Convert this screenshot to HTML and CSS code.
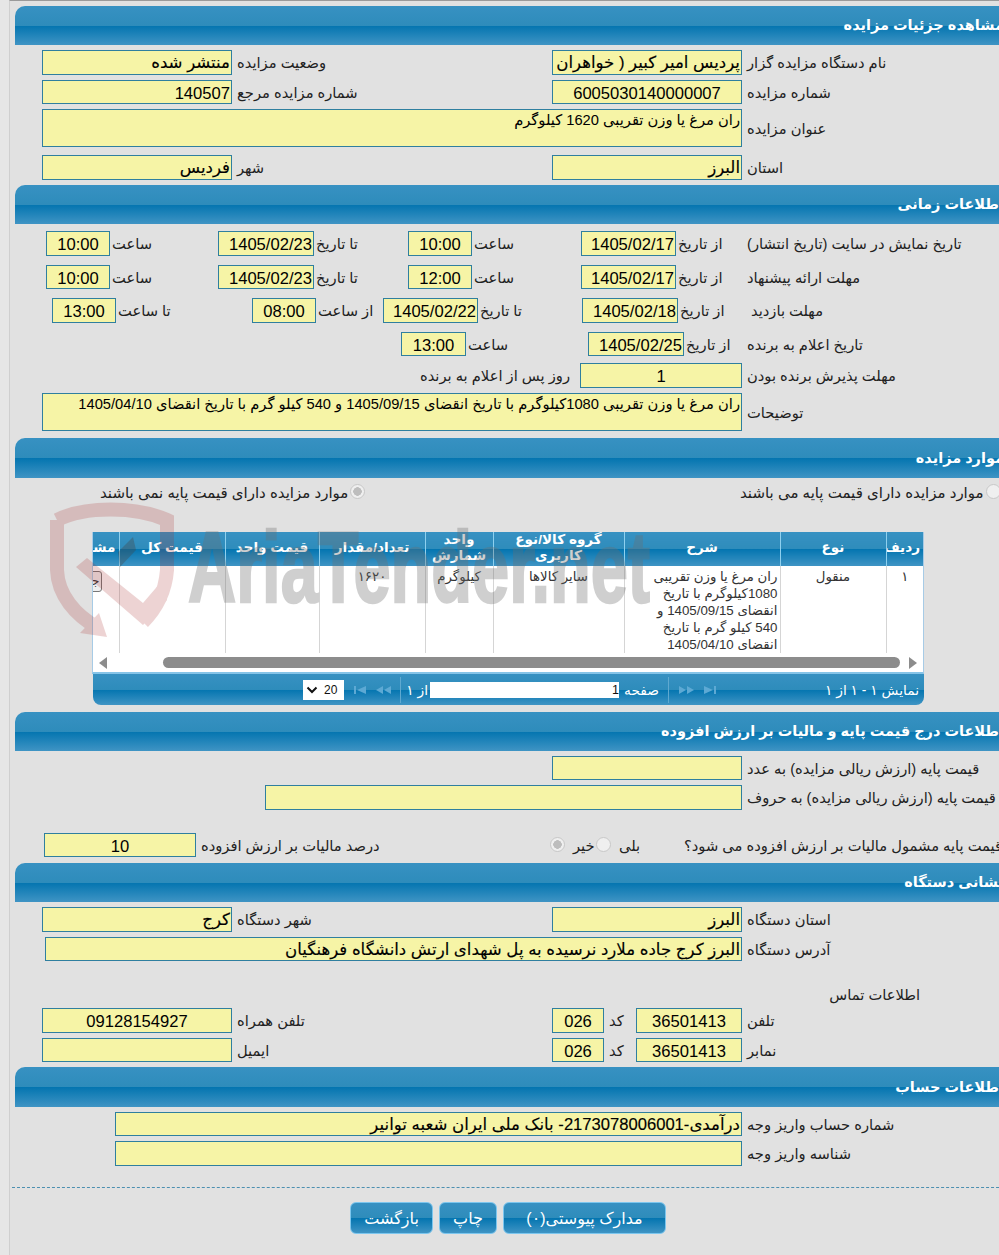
FILE: index.html
```html
<!DOCTYPE html>
<html lang="fa">
<head>
<meta charset="utf-8">
<title>مشاهده جزئیات مزایده</title>
<link rel="stylesheet" href="styles.css">
</head>
<body>
<div class="page">
  <svg class="watermark" viewBox="0 0 700 160" width="700" height="160" aria-hidden="true">
    <g class="wm-red">
      <path d="M57 20 C85 6 135 6 167 20 V70 C165 95 155 110 143 122" fill="none" stroke="#a82a2a" stroke-width="14"/>
      <path d="M57 20 V70 C58 95 75 115 98 128" fill="none" stroke="#a82a2a" stroke-width="14"/>
      <path d="M76 67 L87 58 L143 103 L167 75 V100 L143 125 Z" fill="#a82a2a"/>
      <path d="M80 133 L99 113 L107 137 Z" fill="#a82a2a"/>
    </g>
    <path d="M118 52 L133 37 L136 50 L120 67 Z" fill="#444" fill-opacity=".35"/>
    <text class="wm-text" x="188" y="102" textLength="462" lengthAdjust="spacingAndGlyphs">AriaTender.net</text>
  </svg>

  <section class="sec">
    <h2 class="sec-head" dir="rtl">مشاهده جزئیات مزایده</h2>
    <div class="sec-body gap5">
      <div class="row two">
        <div class="field txt" dir="rtl">منتشر شده</div><span class="lbl" dir="rtl">وضعیت مزایده</span>
        <div class="field txt" dir="rtl">پردیس امیر کبیر ( خواهران )</div><span class="lbl" dir="rtl">نام دستگاه مزایده گزار</span>
      </div>
      <div class="row two h24">
        <div class="field num" dir="rtl">140507</div><span class="lbl" dir="rtl">شماره مزایده مرجع</span>
        <div class="field num center">6005030140000007</div><span class="lbl" dir="rtl">شماره مزایده</span>
      </div>
      <div class="row wide h38">
        <div class="field area" dir="rtl">ران مرغ یا وزن تقریبی 1620 کیلوگرم</div><span class="lbl" dir="rtl">عنوان مزایده</span>
      </div>
      <div class="row two mt3">
        <div class="field txt" dir="rtl">فردیس</div><span class="lbl" dir="rtl">شهر</span>
        <div class="field txt" dir="rtl">البرز</div><span class="lbl" dir="rtl">استان</span>
      </div>
    </div>
  </section>

  <section class="sec">
    <h2 class="sec-head" dir="rtl">اطلاعات زمانی</h2>
    <div class="sec-body times">
      <div class="row t-a">
        <div class="field num center">10:00</div><span class="lbl-s" dir="rtl">ساعت</span>
        <div class="field num" dir="rtl">1405/02/23</div><span class="lbl-s" dir="rtl">تا تاریخ</span>
        <div class="field num center">10:00</div><span class="lbl-s" dir="rtl">ساعت</span>
        <div class="field num" dir="rtl">1405/02/17</div><span class="lbl-s" dir="rtl">از تاریخ</span>
        <span class="lbl" dir="rtl">تاریخ نمایش در سایت (تاریخ انتشار)</span>
      </div>
      <div class="row t-a h24">
        <div class="field num center">10:00</div><span class="lbl-s" dir="rtl">ساعت</span>
        <div class="field num" dir="rtl">1405/02/23</div><span class="lbl-s" dir="rtl">تا تاریخ</span>
        <div class="field num center">12:00</div><span class="lbl-s" dir="rtl">ساعت</span>
        <div class="field num" dir="rtl">1405/02/17</div><span class="lbl-s" dir="rtl">از تاریخ</span>
        <span class="lbl" dir="rtl">مهلت ارائه پیشنهاد</span>
      </div>
      <div class="row t-b">
        <div class="field num center">13:00</div><span class="lbl-s" dir="rtl">تا ساعت</span>
        <div class="field num center">08:00</div><span class="lbl-s" dir="rtl">از ساعت</span>
        <div class="field num" dir="rtl">1405/02/22</div><span class="lbl-s" dir="rtl">تا تاریخ</span>
        <div class="field num" dir="rtl">1405/02/18</div><span class="lbl-s" dir="rtl">از تاریخ</span>
        <span class="lbl" dir="rtl">مهلت بازدید</span>
      </div>
      <div class="row t-c h24">
        <div class="field num center">13:00</div><span class="lbl-s" dir="rtl">ساعت</span>
        <div class="field num" dir="rtl">1405/02/25</div><span class="lbl-s" dir="rtl">از تاریخ</span>
        <span class="lbl" dir="rtl">تاریخ اعلام به برنده</span>
      </div>
      <div class="row t-d mt-2">
        <span class="lbl-end" dir="rtl">روز پس از اعلام به برنده</span>
        <div class="field num center">1</div>
        <span class="lbl" dir="rtl">مهلت پذیرش برنده بودن</span>
      </div>
      <div class="row wide h38 mt-3">
        <div class="field area" dir="rtl">ران مرغ یا وزن تقریبی 1080کیلوگرم با تاریخ انقضای 1405/09/15 و 540 کیلو گرم با تاریخ انقضای 1405/04/10</div><span class="lbl" dir="rtl">توضیحات</span>
      </div>
    </div>
  </section>

  <section class="sec sec-items">
    <h2 class="sec-head tall" dir="rtl">موارد مزایده</h2>
    <div class="radios">
      <label class="choice c-no" dir="rtl"><i class="radio on"></i><span>موارد مزایده دارای قیمت پایه نمی باشند</span></label>
      <label class="choice c-yes" dir="rtl"><i class="radio"></i><span>موارد مزایده دارای قیمت پایه می باشند</span></label>
    </div>
    <div class="grid-box">
      <div class="grid-clip">
        <table class="grid" dir="rtl">
          <colgroup>
            <col class="c1"><col class="c2"><col class="c3"><col class="c4"><col class="c5"><col class="c6"><col class="c7"><col class="c8"><col class="c9">
          </colgroup>
          <thead>
            <tr><th>ردیف</th><th>نوع</th><th>شرح</th><th>گروه کالا/نوع کاربری</th><th>واحد شمارش</th><th>تعداد/مقدار</th><th>قیمت واحد</th><th>قیمت کل</th><th>مشاهده</th></tr>
          </thead>
          <tbody>
            <tr>
              <td class="mid">۱</td><td class="mid">منقول</td>
              <td>ران مرغ یا وزن تقریبی 1080کیلوگرم با تاریخ انقضای 1405/09/15 و 540 کیلو گرم با تاریخ انقضای 1405/04/10</td>
              <td class="mid">سایر کالاها</td><td class="mid">کیلوگرم</td><td class="mid">۱۶۲۰</td><td></td><td></td>
              <td class="act"><span class="mini-btn">جزئیات</span></td>
            </tr>
          </tbody>
        </table>
      </div>
      <div class="hscroll">
        <i class="arr arr-l"></i><div class="track"><div class="thumb"></div></div><i class="arr arr-r"></i>
      </div>
      <div class="pager">
        <div class="pick"><span>20</span>
          <svg width="12" height="8" viewBox="0 0 12 8"><path d="M1.5 1.5 6 6l4.5-4.5" fill="none" stroke="#111" stroke-width="2"/></svg>
        </div>
        <svg class="pg-ic" width="12" height="8" viewBox="0 0 12 8"><path d="M0 0h2v8H0zM12 0v8L3 4z"/></svg>
        <svg class="pg-ic" width="15" height="8" viewBox="0 0 15 8"><path d="M7 0v8L0 4zM15 0v8L8 4z"/></svg>
        <i class="pg-sep"></i>
        <span class="pg-txt pg-of" dir="rtl">از ۱</span>
        <div class="pg-input">1</div>
        <span class="pg-txt" dir="rtl">صفحه</span>
        <i class="pg-sep"></i>
        <svg class="pg-ic" width="15" height="8" viewBox="0 0 15 8"><path d="M0 0v8l7-4zM8 0v8l7-4z"/></svg>
        <svg class="pg-ic" width="12" height="8" viewBox="0 0 12 8"><path d="M0 0v8l9-4zM10 0h2v8h-2z"/></svg>
        <span class="pg-txt pg-info" dir="rtl">نمایش ۱ - ۱ از ۱</span>
      </div>
    </div>
  </section>

  <section class="sec">
    <h2 class="sec-head" dir="rtl">اطلاعات درج قیمت پایه و مالیات بر ارزش افزوده</h2>
    <div class="sec-body price">
      <div class="row one">
        <div class="field txt" dir="rtl"></div><span class="lbl" dir="rtl">قیمت پایه (ارزش ریالی مزایده) به عدد</span>
      </div>
      <div class="row words">
        <div class="field txt" dir="rtl"></div><span class="lbl" dir="rtl">قیمت پایه (ارزش ریالی مزایده) به حروف</span>
      </div>
      <div class="row tax">
        <div class="field num center">10</div><span class="lbl" dir="rtl">درصد مالیات بر ارزش افزوده</span>
        <label class="mini-choice" dir="rtl"><span>خیر</span><i class="radio on"></i></label>
        <label class="mini-choice" dir="rtl"><span>بلی</span><i class="radio"></i></label>
        <span class="lbl" dir="rtl">قیمت پایه مشمول مالیات بر ارزش افزوده می شود؟</span>
      </div>
    </div>
  </section>

  <section class="sec">
    <h2 class="sec-head" dir="rtl">نشانی دستگاه</h2>
    <div class="sec-body gap5">
      <div class="row two">
        <div class="field txt" dir="rtl">کرج</div><span class="lbl" dir="rtl">شهر دستگاه</span>
        <div class="field txt" dir="rtl">البرز</div><span class="lbl" dir="rtl">استان دستگاه</span>
      </div>
      <div class="row addr h24">
        <div class="field txt" dir="rtl">البرز کرج جاده ملارد نرسیده به پل شهدای ارتش دانشگاه فرهنگیان</div><span class="lbl" dir="rtl">آدرس دستگاه</span>
      </div>
      <div class="contact-title" dir="rtl">اطلاعات تماس</div>
      <div class="row phone">
        <div class="field num center">09128154927</div><span class="lbl" dir="rtl">تلفن همراه</span>
        <div class="field num center">026</div><span class="lbl" dir="rtl">کد</span>
        <div class="field num center">36501413</div><span class="lbl" dir="rtl">تلفن</span>
      </div>
      <div class="row phone h24">
        <div class="field num center"></div><span class="lbl" dir="rtl">ایمیل</span>
        <div class="field num center">026</div><span class="lbl" dir="rtl">کد</span>
        <div class="field num center">36501413</div><span class="lbl" dir="rtl">نمابر</span>
      </div>
    </div>
  </section>

  <section class="sec">
    <h2 class="sec-head tall" dir="rtl">اطلاعات حساب</h2>
    <div class="sec-body gap5">
      <div class="row acct h24">
        <div class="field txt" dir="rtl">درآمدی-2173078006001- بانک ملی ایران شعبه توانیر</div><span class="lbl" dir="rtl">شماره حساب واریز وجه</span>
      </div>
      <div class="row acct">
        <div class="field txt" dir="rtl"></div><span class="lbl" dir="rtl">شناسه واریز وجه</span>
      </div>
    </div>
  </section>

  <div class="actions">
    <button class="btn b-back" type="button">بازگشت</button>
    <button class="btn b-print" type="button">چاپ</button>
    <button class="btn b-docs" type="button">مدارک پیوستی(۰)</button>
  </div>
</div>
</body>
</html>
```

FILE: styles.css
```css
* { box-sizing: border-box; }
html, body { margin: 0; padding: 0; height: 1255px; overflow: hidden; background: #e6e6e6; }
body { font-family: "Liberation Sans", "DejaVu Sans", sans-serif; color: #222; }

.page {
  position: relative;
  width: 1040px;
  height: 1255px;
  margin-left: 9px;
  padding: 5px 0 0 6px;
  background: #e1e1e1;
  border-left: 1px solid #cfcfcf;
  border-top: 1px solid #9a9a9a;
}
.watermark { position: absolute; left: -10px; top: 499px; z-index: 5; pointer-events: none; }
.wm-red { opacity: .2; }
.wm-text {
  font-family: "Liberation Sans", sans-serif;
  font-weight: 700;
  font-size: 100px;
  fill: #6e6e6e;
  stroke: #6e6e6e;
  stroke-width: 2.5;
  opacity: .32;
}

.sec { width: 995px; margin-left: -1px; padding-left: 1px; }
.sec-head {
  margin: 0 0 0 -1px;
  height: 39px;
  padding: 9px 7px 0 0;
  width: 996px;
  font-size: 14.5px;
  line-height: 20px;
  font-weight: 700;
  color: #fff;
  white-space: nowrap;
  border-radius: 10px 0 0 0;
  background: linear-gradient(#3791c2 0, #2e8cbb 50%, #0475b0 51%, #3f94c4 100%);
}
.sec-head.tall { height: 40px; padding-top: 10px; }

.sec-body { display: flex; flex-direction: column; margin-left: -16px; }
.gap5 { gap: 5px; padding-top: 5px; padding-bottom: 5px; }

.row { display: grid; height: 25px; grid-template-rows: 100%; align-items: stretch; }
.h24 { height: 24px; }
.h38 { height: 38px; }
.mt3 { margin-top: 3px; }
.mt-2 { margin-top: -2px; }
.mt-3 { margin-top: -3px; }

.two { grid-template-columns: 190px 320px 190px 1fr; padding-left: 42px; }
.wide { grid-template-columns: 700px 1fr; padding-left: 42px; }
.addr { grid-template-columns: 697px 1fr; padding-left: 45px; }
.acct { grid-template-columns: 627px 1fr; padding-left: 115px; }

.field {
  height: 100%;
  padding: 0 1px;
  background: #f6f4a6;
  border: 1px solid #2f7f9f;
  color: #000;
  white-space: nowrap;
  overflow: hidden;
  text-align: right;
}
.txt { font-size: 16.6px; line-height: 24px; -webkit-text-stroke: .15px #000; }
.num { font-size: 16.6px; line-height: 25px; }
.center { text-align: center; }
.area { font-size: 14.7px; line-height: 20px; }

.lbl, .lbl-s, .lbl-end {
  justify-self: start;
  font-size: 14.7px;
  line-height: 27px;
  color: #222;
  white-space: nowrap;
}
.lbl { padding-left: 5px; }
.wide .lbl { align-self: center; padding-top: 3px; }
.lbl-s { padding-left: 2px; }
.lbl-end { justify-self: end; padding-right: 10px; }

.times { padding: 7px 0; }
.times .row { margin-bottom: 9px; }
.times .row.t-d { margin-bottom: 8px; }
.times .row.wide { margin-bottom: 0; }
.t-a { grid-template-columns: 64px 108px 96px 94px 64px 109px 95px 71px 1fr; padding-left: 46px; }
.t-a .lbl, .t-c .lbl { padding-left: 0; }
.t-b { grid-template-columns: 64px 136px 64px 67px 95px 104px 96px 69px 1fr; padding-left: 52px; }
.t-b .lbl { padding-left: 4px; }
.t-c { grid-template-columns: 65px 122px 96px 63px 1fr; padding-left: 401px; }
.t-d { grid-template-columns: 580px 162px 1fr; }

.radios { position: relative; height: 54px; }
.choice {
  position: absolute;
  top: 5px;
  display: flex;
  align-items: flex-start;
  gap: 2px;
  font-size: 15px;
  line-height: 20px;
  white-space: nowrap;
}
.c-no { left: 84px; }
.c-yes { left: 724px; }
.radio {
  display: block;
  width: 15px;
  height: 15px;
  margin-top: 1px;
  border-radius: 50%;
  background: #efefef;
  border: 1px solid #c8c8c8;
  flex: none;
}
.radio.on { background: radial-gradient(#bdbdbd 0 4px, #efefef 4.5px); }

.grid-box { width: 832px; margin: 0 0 7px 76px; height: 173px; display: flex; flex-direction: column; }
.grid-clip { height: 121px; overflow: hidden; background: #fff; border-left: 1px solid #a7cbe6; border-right: 1px solid #a7cbe6; position: relative; }
.grid { table-layout: fixed; border-collapse: collapse; width: 860px; position: absolute; right: 0; top: 0; }
.c1 { width: 37px; } .c2 { width: 106px; } .c3 { width: 156px; } .c4 { width: 131px; } .c5 { width: 68px; }
.c6 { width: 106px; } .c7 { width: 94px; } .c8 { width: 106px; } .c9 { width: 56px; }
.grid th {
  height: 34px;
  padding: 0 3px 2px;
  font-size: 13.6px;
  line-height: 16px;
  font-weight: 700;
  color: #fff;
  background: linear-gradient(#3791c2 0, #2e8cbb 50%, #0475b0 51%, #3f94c4 100%);
  border-left: 1px solid #8ed0ef;
  white-space: normal;
  overflow: hidden;
}
.grid td {
  height: 87px;
  padding: 2px 2px 0 8px;
  vertical-align: top;
  font-size: 13.3px;
  line-height: 17px;
  color: #333;
  border-left: 1px solid #d5d5d5;
  border-bottom: 1px solid #dcdcdc;
  overflow: hidden;
}
.grid td.mid { text-align: center; padding-right: 3px; padding-left: 3px; }
.grid td.act { padding-right: 17px; }
.mini-btn {
  display: block;
  width: 38px;
  height: 21px;
  margin-top: 3px;
  padding-right: 1px;
  border: 1px solid #777;
  border-radius: 3px;
  background: #efefef;
  font-size: 12px;
  line-height: 19px;
  white-space: nowrap;
  overflow: hidden;
}

.hscroll {
  height: 21px;
  background: #fff;
  display: flex;
  align-items: center;
  border-left: 1px solid #a7cbe6;
  border-right: 1px solid #a7cbe6;
  border-bottom: 2px solid #86c4e8;
  padding: 0 6px;
}
.arr { display: block; width: 0; height: 0; border-top: 6px solid transparent; border-bottom: 6px solid transparent; }
.arr-l { border-right: 8px solid #8c8c8c; }
.arr-r { border-left: 8px solid #8c8c8c; }
.track { flex: 1; padding: 0 9px 0 56px; }
.thumb { height: 11px; border-radius: 6px; background: #8c8c8c; }

.pager {
  height: 31px;
  margin-left: 1px;
  border-radius: 0 0 8px 8px;
  background: linear-gradient(#3791c2 0, #2e8cbb 50%, #0475b0 51%, #3f94c4 100%);
  display: flex;
  align-items: center;
  padding-left: 210px;
  color: #fff;
  font-size: 13.8px;
}
.pick {
  width: 41px;
  height: 20px;
  background: #fff;
  color: #111;
  display: flex;
  flex-direction: row-reverse;
  align-items: center;
  justify-content: flex-end;
  gap: 6px;
  padding-left: 3px;
  font-size: 12px;
}
.pg-ic { fill: #5da9d4; margin-left: 10px; flex: none; }
.pg-sep { width: 1px; height: 26px; background: #5fa9d0; margin-left: 9px; }
.pg-txt { white-space: nowrap; margin-left: 5px; }
.pg-of { width: 22px; }
.pg-input {
  width: 189px;
  height: 16px;
  margin-left: 2px;
  background: #fff;
  color: #111;
  text-align: right;
  font-size: 12.6px;
  line-height: 16px;
}
.pg-info { margin-left: auto; margin-right: 5px; }

.price { padding-top: 5px; padding-bottom: 6px; }
.one { grid-template-columns: 190px 1fr; padding-left: 552px; height: 24px; margin-bottom: 5px; }
.words { grid-template-columns: 477px 1fr; padding-left: 265px; height: 25px; margin-bottom: 23px; }
.tax { grid-template-columns: 152px 354px 46px 88px 1fr; padding-left: 44px; height: 24px; }
.mini-choice {
  display: flex;
  justify-self: start;
  align-items: flex-start;
  gap: 8px;
  font-size: 14.7px;
  line-height: 27px;
  white-space: nowrap;
}
.mini-choice .radio { margin-top: 4px; }
.tax > .lbl:last-child { padding-left: 0; }

.contact-title {
  width: 1077px;
  height: 12px;
  margin-top: 19px;
  margin-bottom: 6px;
  padding-right: 157px;
  font-size: 14.7px;
  line-height: 20px;
  text-align: right;
}
.phone { grid-template-columns: 190px 320px 52px 32px 106px 1fr; padding-left: 42px; }

.actions {
  margin: 16px 0 0 -4px;
  padding: 14px 0 0 338px;
  border-top: 1px dashed #4c8fb0;
  display: flex;
  gap: 6px;
}
.btn {
  height: 32px;
  padding: 0;
  font-family: inherit;
  font-size: 16px;
  color: #fff;
  border: 1px solid #7cc6ee;
  border-radius: 6px;
  background: linear-gradient(#3791c2 0, #2e8cbb 50%, #0475b0 51%, #3f94c4 100%);
}
.b-back { width: 83px; }
.b-print { width: 58px; }
.b-docs { width: 163px; }
```
